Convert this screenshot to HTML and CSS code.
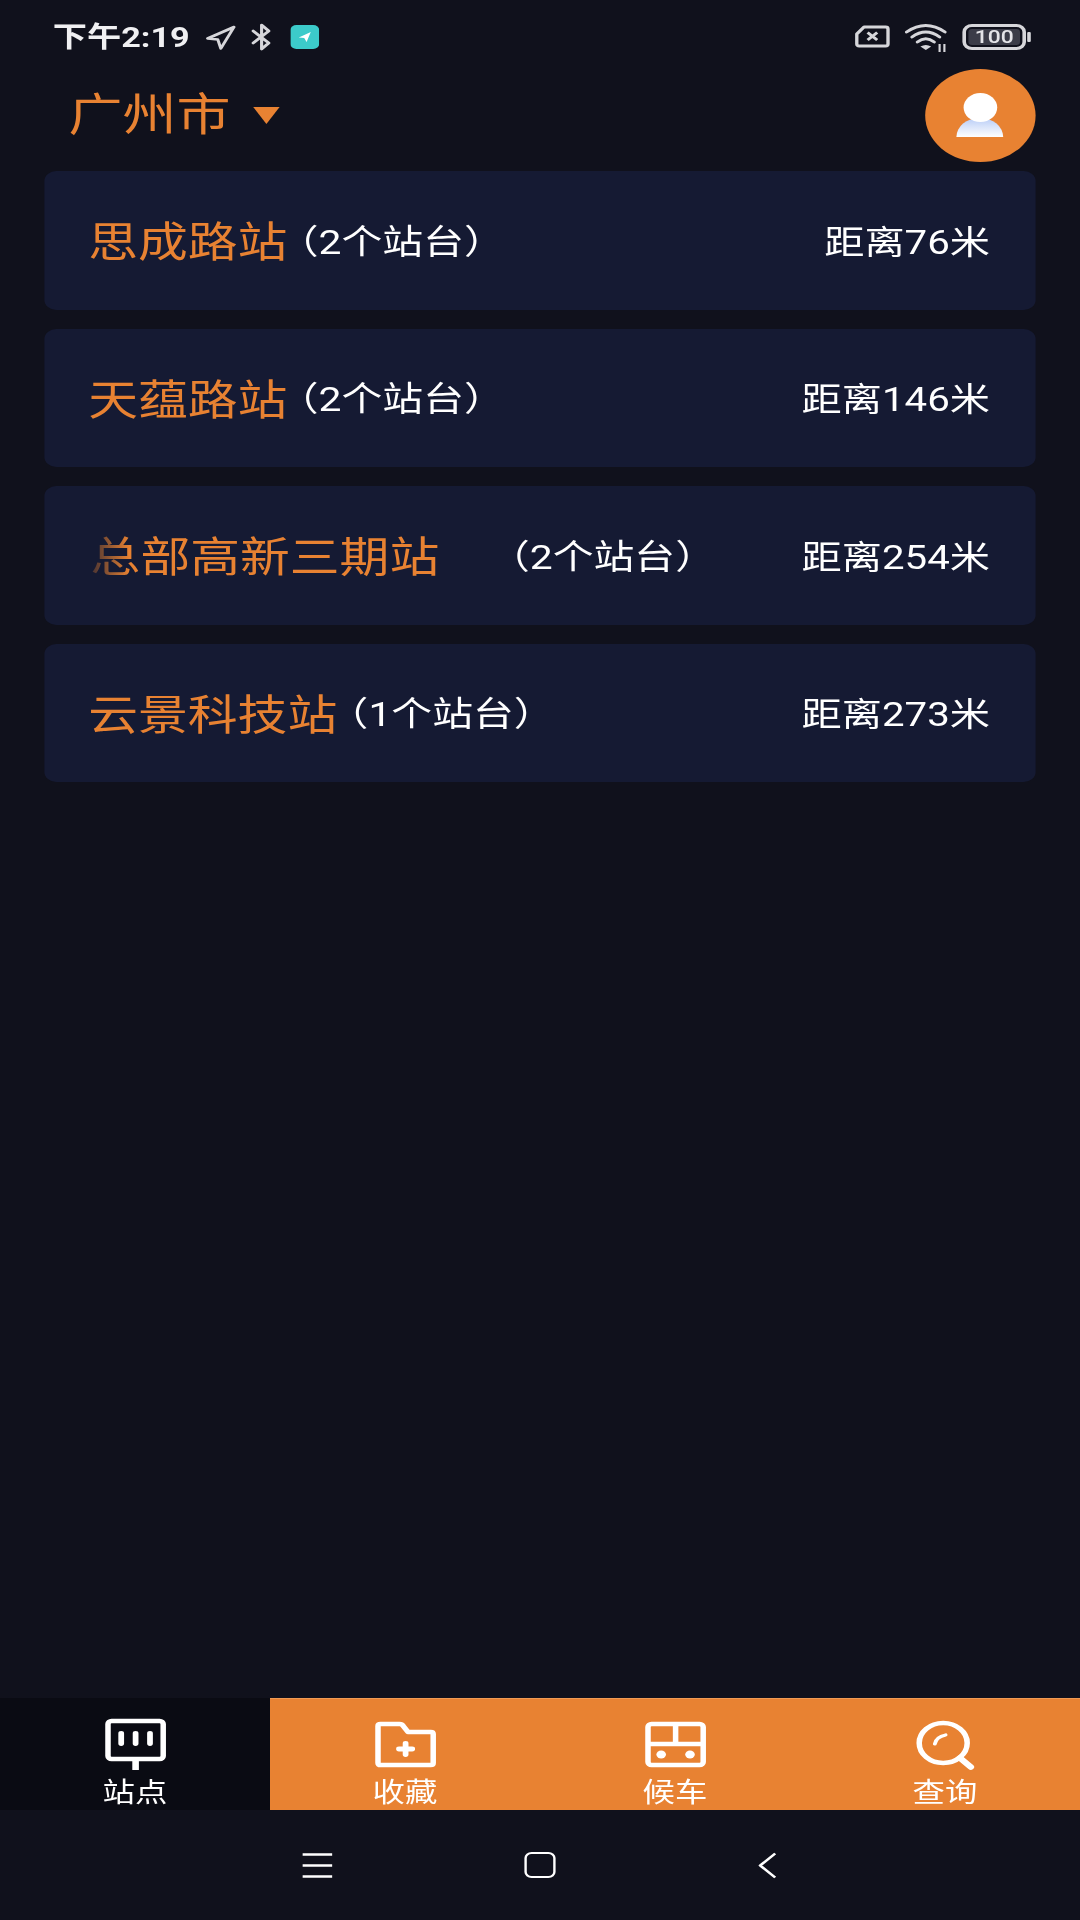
FILE: index.html
```html
<!DOCTYPE html>
<html lang="zh-CN">
<head>
  <meta charset="UTF-8" />
  <meta name="viewport" content="width=device-width, initial-scale=1" />
  <title>站点</title>
  <link rel="stylesheet" href="styles.css">
</head>
<body>
  <div class="screen">
    <!-- Status bar -->
    <div class="status">
      <span class="time">下午2:19</span>
      <svg class="st-nav" viewBox="0 0 26 25"><path d="M2 13.500 L24 2 L13 23.500 L10.500 14.500 Z" fill="none" stroke="#d6d6da" stroke-width="2.600" stroke-linejoin="round"/></svg>
      <svg class="st-bt" viewBox="0 0 18 28"><path d="M2 8 L15 20 L9 26 V2 L15 8 L2 20" fill="none" stroke="#d6d6da" stroke-width="2.600" stroke-linejoin="round" stroke-linecap="round"/></svg>
      <svg class="st-teal" viewBox="0 0 24 24"><rect width="24" height="24" rx="5" fill="#3ccbca"/><path d="M7 12.500 L17 7 L13.500 17 L11.500 13 Z" fill="#fff"/></svg>
      <span class="status-gap"></span>
      <svg class="st-sim" viewBox="0 0 30 23"><path d="M8 2 H26 Q28 2 28 4 V19 Q28 21 26 21 H4 Q2 21 2 19 V9 Z" fill="none" stroke="#d6d6da" stroke-width="2.800" stroke-linejoin="round"/><path d="M11 7.500 L19 15 M19 7.500 L11 15" stroke="#d6d6da" stroke-width="2.600"/></svg>
      <svg class="st-wifi" viewBox="0 0 35 28"><g fill="none" stroke="#d6d6da" stroke-width="2.800" stroke-linecap="round"><path d="M1.500 8 Q17.500 -5 33.500 8"/><path d="M6 13 Q17.500 3 29 13"/><path d="M10.500 18 Q17.500 11.500 24.500 18"/></g><path d="M13 22.500 Q17.500 19.500 22 22.500 L17.500 26 Z" fill="#d6d6da"/><path d="M29 20 V28 M33 20 V28" stroke="#d6d6da" stroke-width="1.800"/></svg>
      <div class="battery"><span class="battery-fill">100</span></div>
      <span class="battery-nub"></span>
    </div>

    <!-- City and profile -->
    <div class="top">
      <span class="city">广州市</span>
      <span class="caret"></span>
      <div class="avatar">
        <span class="avatar-body"></span>
        <span class="avatar-head"></span>
      </div>
    </div>

    <!-- Stations -->
    <div class="stations">
      <div class="station">
        <span class="name">思成路站</span><span class="count">（2个站台）</span>
        <span class="dist">距离76米</span>
      </div>
      <div class="station">
        <span class="name">天蕴路站</span><span class="count">（2个站台）</span>
        <span class="dist">距离146米</span>
      </div>
      <div class="station">
        <span class="name name-scroll">总部高新三期站</span><span class="count">（2个站台）</span>
        <span class="dist">距离254米</span>
      </div>
      <div class="station">
        <span class="name">云景科技站</span><span class="count">（1个站台）</span>
        <span class="dist">距离273米</span>
      </div>
    </div>

    <!-- Bottom tabs -->
    <div class="tabs">
      <div class="tab tab-active">
        <svg class="tab-icon" viewBox="0 0 52 52">
          <rect x="3" y="3" width="46" height="38" rx="3" fill="none" stroke="#fff" stroke-width="4.600"/>
          <path d="M26 41 V52" stroke="#fff" stroke-width="5.500"/>
          <path d="M14 15.500 V25.500 M26 15.500 V25.500 M38 15.500 V25.500" stroke="#fff" stroke-width="4.800" stroke-linecap="round"/>
        </svg>
        <span class="tab-label">站点</span>
      </div>
      <div class="tab">
        <svg class="tab-icon" viewBox="0 0 52 52">
          <path d="M3 8 Q3 6 5 6 H21 Q23 6 24 8 L28 14 H47 Q49 14 49 16 V45 Q49 47 47 47 H5 Q3 47 3 45 Z" fill="none" stroke="#fff" stroke-width="4.600" stroke-linejoin="round"/>
          <path d="M20.500 31 H31.500 M26 25.500 V36.500" stroke="#fff" stroke-width="4.800" stroke-linecap="round"/>
        </svg>
        <span class="tab-label">收藏</span>
      </div>
      <div class="tab">
        <svg class="tab-icon" viewBox="0 0 52 52">
          <rect x="3" y="6" width="46" height="41" rx="3" fill="none" stroke="#fff" stroke-width="4.600"/>
          <path d="M3 26 H49 M26 6 V26" stroke="#fff" stroke-width="4.600"/>
          <circle cx="14" cy="36.500" r="4" fill="#fff"/>
          <circle cx="38" cy="36.500" r="4" fill="#fff"/>
        </svg>
        <span class="tab-label">候车</span>
      </div>
      <div class="tab">
        <svg class="tab-icon" viewBox="0 0 52 52">
          <circle cx="24" cy="25" r="20" fill="none" stroke="#fff" stroke-width="4.600"/>
          <path d="M38 40 L47 49" stroke="#fff" stroke-width="5.500" stroke-linecap="round"/>
          <path d="M17 26 Q18 19 26 17" fill="none" stroke="#fff" stroke-width="3.200" stroke-linecap="round"/>
        </svg>
        <span class="tab-label">查询</span>
      </div>
    </div>

    <!-- System nav -->
    <div class="sysnav">
      <svg class="nav-menu" viewBox="0 0 25 25"><path d="M0 1.500 H25 M0 12.500 H25 M0 23.500 H25" stroke="#fff" stroke-width="2.400"/></svg>
      <span class="nav-home"></span>
      <svg class="nav-back" viewBox="0 0 15 27"><path d="M14 1.500 L1.500 13.500 L14 25.500" fill="none" stroke="#fff" stroke-width="2.400"/></svg>
    </div>
  </div>
</body>
</html>
```

FILE: styles.css
```css
:root {
  --bg: #10111c;
  --card: #151a33;
  --accent: #e88232;
  --tab-dark: #0a0b13;
}

* { box-sizing: border-box; margin: 0; padding: 0; }

html, body {
  width: 1080px;
  height: 1920px;
  overflow: hidden;
  background: var(--bg);
}

/* The whole app is drawn on a 900 wide canvas and stretched to the window */
.screen {
  width: 900px;
  height: 1920px;
  display: flex;
  flex-direction: column;
  transform: scaleX(1.2);
  transform-origin: 0 0;
  background: var(--bg);
  font-family: Roboto, "Noto Sans CJK SC", sans-serif;
  color: #fff;
}

/* Status bar */
.status {
  height: 69px;
  padding: 23px 41px 0 44px;
  display: flex;
  align-items: flex-start;
}
.time {
  width: 114px;
  padding-top: 1px;
  font-size: 28.500px;
  font-weight: 700;
  line-height: 28px;
  color: #f0f0f2;
  white-space: nowrap;
}
.status svg { display: block; flex: none; }
.st-nav { width: 26px; height: 25px; margin: 2px 0 0 13px; }
.st-bt { width: 18px; height: 28px; margin: 0 0 0 12px; }
.st-teal { width: 24px; height: 24px; margin: 2px 0 0 15px; }
.status-gap { flex: 1; }
.st-sim { width: 30px; height: 23px; margin-top: 2px; }
.st-wifi { width: 35px; height: 28px; margin: 1px 0 0 12px; }
.battery {
  width: 53px;
  height: 26px;
  margin: 1px 0 0 13px;
  padding: 2px;
  border: 3px solid #d6d6da;
  border-radius: 8px;
  display: flex;
}
.battery-fill {
  flex: 1;
  background: #3b3c48;
  border-radius: 3px;
  font-size: 19px;
  font-weight: 500;
  line-height: 16px;
  text-align: center;
  color: #e4e4e8;
}
.battery-nub {
  width: 3px;
  height: 10px;
  margin: 9px 0 0 1px;
  background: #d6d6da;
  border-radius: 1px;
}

/* City row */
.top {
  height: 93px;
  padding: 0 36.750px 0 57px;
  display: flex;
  align-items: center;
}
.city {
  font-size: 45px;
  line-height: 54px;
  color: var(--accent);
}
.caret {
  width: 0;
  height: 0;
  margin-left: 19px;
  border-left: 11px solid transparent;
  border-right: 11px solid transparent;
  border-top: 17px solid var(--accent);
}
.avatar {
  position: relative;
  width: 92px;
  height: 93px;
  margin-left: auto;
  border-radius: 50%;
  background: var(--accent);
}
.avatar-head {
  position: absolute;
  left: 32px;
  top: 24px;
  width: 28px;
  height: 29px;
  border-radius: 50%;
  background: #fff;
}
.avatar-body {
  position: absolute;
  left: 26px;
  top: 49px;
  width: 39px;
  height: 19px;
  border-radius: 20px 20px 0 0;
  background: linear-gradient(#b9cdf6, #fff);
}

/* Station list */
.stations {
  flex: 1;
  margin-top: 9px;
  padding: 0 37px 0 36.500px;
}
.station {
  height: 138.500px;
  margin-bottom: 19px;
  padding: 0 38px 2px 37px;
  display: flex;
  align-items: center;
  background: var(--card);
  border-radius: 10px;
}
.name {
  font-size: 41.500px;
  color: var(--accent);
  white-space: nowrap;
}
.name-scroll {
  width: 342px;
  padding-left: 2px;
  -webkit-mask-image: linear-gradient(90deg, rgba(0,0,0,0.2), #000 34px);
  mask-image: linear-gradient(90deg, rgba(0,0,0,0.2), #000 34px);
}
.count {
  margin-left: -8px;
  font-size: 34px;
  white-space: nowrap;
}
.dist {
  margin-left: auto;
  font-size: 33.500px;
  white-space: nowrap;
}

/* Bottom tabs */
.tabs {
  height: 112px;
  display: grid;
  grid-template-columns: repeat(4, 1fr);
  background: var(--accent);
  box-shadow: inset 0 1px 0 #f09a54;
}
.tab {
  padding-top: 20px;
  display: flex;
  flex-direction: column;
  align-items: center;
  overflow: hidden;
}
.tab-active { background: var(--tab-dark); }
.tab-icon {
  width: 52px;
  height: 52px;
  flex: none;
}
.tab-label {
  margin-top: 8px;
  font-size: 27px;
  line-height: 30px;
  color: #fff;
}

/* System nav */
.sysnav {
  height: 110px;
  padding: 42px 0 0 252px;
  display: flex;
  align-items: flex-start;
}
.nav-menu { width: 25px; height: 25px; margin-top: 1px; }
.nav-home {
  width: 26px;
  height: 26px;
  margin-left: 160px;
  border: 2.500px solid #fff;
  border-radius: 6px;
}
.nav-back { width: 15px; height: 27px; margin-left: 169px; }
```
